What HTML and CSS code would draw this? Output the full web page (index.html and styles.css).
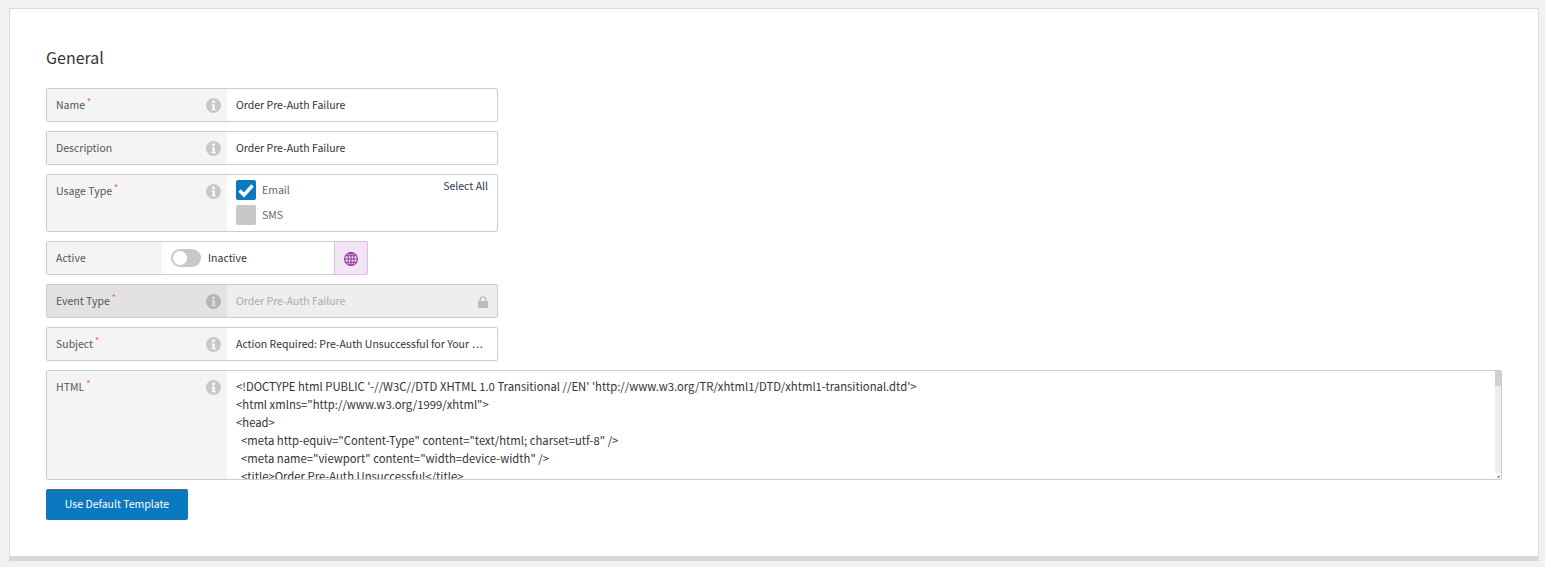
FILE: index.html
```html
<!DOCTYPE html>
<html lang="en">
<head>
<meta charset="utf-8">
<title>General</title>
<link rel="stylesheet" href="styles.css">
</head>
<body>
<main class="card">
  <h2 class="title">General</h2>
  <div class="form">
    <div class="row">
      <div class="label"><span>Name<sup class="req">*</sup></span>
        <svg class="info" viewBox="0 0 16 16"><circle cx="8" cy="8" r="8"/><circle class="i" cx="8" cy="4.2" r="1.5"/><path class="i" d="M6 6.9h3.3v4.7h1v1.4H6v-1.4h1v-3.3H6z"/></svg>
      </div>
      <div class="value">Order Pre-Auth Failure</div>
    </div>
    <div class="row">
      <div class="label"><span>Description</span>
        <svg class="info" viewBox="0 0 16 16"><circle cx="8" cy="8" r="8"/><circle class="i" cx="8" cy="4.2" r="1.5"/><path class="i" d="M6 6.9h3.3v4.7h1v1.4H6v-1.4h1v-3.3H6z"/></svg>
      </div>
      <div class="value">Order Pre-Auth Failure</div>
    </div>
    <div class="row row-usage">
      <div class="label label-top"><span>Usage Type<sup class="req">*</sup></span>
        <svg class="info" viewBox="0 0 16 16"><circle cx="8" cy="8" r="8"/><circle class="i" cx="8" cy="4.2" r="1.5"/><path class="i" d="M6 6.9h3.3v4.7h1v1.4H6v-1.4h1v-3.3H6z"/></svg>
      </div>
      <div class="checks">
        <div class="check-list">
          <div class="check"><span class="box box-on"><svg viewBox="0 0 20 20"><path d="M3.5 10.5l4.5 4.5 8.5-9.5" fill="none" stroke="#fff" stroke-width="3.4"/></svg></span>Email</div>
          <div class="check"><span class="box"></span>SMS</div>
        </div>
        <a class="select-all">Select All</a>
      </div>
    </div>
    <div class="row row-active">
      <div class="label label-active"><span>Active</span></div>
      <div class="value value-toggle"><span class="toggle"><span class="knob"></span></span><span>Inactive</span></div>
      <div class="globe">
        <svg viewBox="1 1 14 14" fill="none" stroke="#93379b" stroke-width="1.1"><circle cx="8" cy="8" r="6.4"/><ellipse cx="8" cy="8" rx="3" ry="6.4"/><path d="M8 1.6v12.8M1.6 8h12.8M2.6 4.8h10.8M2.6 11.2h10.8"/></svg>
      </div>
    </div>
    <div class="row row-disabled">
      <div class="label"><span>Event Type<sup class="req">*</sup></span>
        <svg class="info info-dark" viewBox="0 0 16 16"><circle cx="8" cy="8" r="8"/><circle class="i" cx="8" cy="4.2" r="1.5"/><path class="i" d="M6 6.9h3.3v4.7h1v1.4H6v-1.4h1v-3.3H6z"/></svg>
      </div>
      <div class="value value-locked"><span>Order Pre-Auth Failure</span>
        <svg class="lock" viewBox="0 0 10 12"><path d="M0 5h10v7H0z" fill="#bdbdbd"/><path d="M2.2 5.5V3.2a2.8 2.3 0 0 1 5.6 0v2.3" fill="none" stroke="#bdbdbd" stroke-width="1.4"/></svg>
      </div>
    </div>
    <div class="row">
      <div class="label"><span>Subject<sup class="req">*</sup></span>
        <svg class="info" viewBox="0 0 16 16"><circle cx="8" cy="8" r="8"/><circle class="i" cx="8" cy="4.2" r="1.5"/><path class="i" d="M6 6.9h3.3v4.7h1v1.4H6v-1.4h1v-3.3H6z"/></svg>
      </div>
      <div class="value"><span>Action Required: Pre-Auth Unsuccessful for Your <span class="dots">…</span></span></div>
    </div>
    <div class="row row-html">
      <div class="label label-top"><span>HTML<sup class="req">*</sup></span>
        <svg class="info" viewBox="0 0 16 16"><circle cx="8" cy="8" r="8"/><circle class="i" cx="8" cy="4.2" r="1.5"/><path class="i" d="M6 6.9h3.3v4.7h1v1.4H6v-1.4h1v-3.3H6z"/></svg>
      </div>
      <pre class="code">&lt;!DOCTYPE html PUBLIC '-//W3C//DTD XHTML 1.0 Transitional //EN' 'http://www.w3.org/TR/xhtml1/DTD/xhtml1-transitional.dtd'&gt;
&lt;html xmlns="http://www.w3.org/1999/xhtml"&gt;
&lt;head&gt;
  &lt;meta http-equiv="Content-Type" content="text/html; charset=utf-8" /&gt;
  &lt;meta name="viewport" content="width=device-width" /&gt;
  &lt;title&gt;Order Pre-Auth Unsuccessful&lt;/title&gt;</pre>
      <div class="scrollbar">
        <div class="thumb"></div>
        <div class="track"></div>
        <div class="grip"><svg viewBox="0 0 6 6" width="6" height="6"><path d="M4.5 2v2.5H2z" fill="#555"/></svg></div>
      </div>
    </div>
  </div>
  <button class="btn" type="button">Use Default Template</button>
</main>
</body>
</html>
```
FILE: styles.css
```css
* { box-sizing: border-box; }
html, body { height: 100%; }
body {
  margin: 0;
  padding: 8px 6px 0 9px;
  background: #f1f1f1;
  font-family: "Noto Sans CJK SC", "Noto Sans", sans-serif;
  font-size: 10.5px;
  color: #333;
  overflow: hidden;
}
.card {
  height: 553px;
  background: #fff;
  border: 1px solid #dcdcdc;
  border-bottom: 5px solid #d8d8d8;
  padding: 37px 36px 0 36px;
}
.title {
  margin: 0 0 19px;
  font-size: 16px;
  font-weight: 400;
  line-height: 23px;
  color: #333;
  height: 23px;
}
.form { display: flex; flex-direction: column; gap: 9px; }
.row {
  display: flex;
  width: 452px;
  height: 34px;
  border: 1px solid #ccc;
  border-radius: 2px;
  line-height: 18px;
  overflow: hidden;
}
.label {
  flex: 0 0 180px;
  display: flex;
  justify-content: space-between;
  align-items: center;
  padding: 0 6px 0 9px;
  background: #f4f4f4;
  color: #555;
}
.label-top { align-items: flex-start; padding-top: 7px; }
.req { color: #f5566a; font-size: 9px; line-height: 0; margin-left: 2px; }
.info { width: 15px; height: 15px; display: block; margin-top: 1px; }
.label-top .info { margin-top: 2px; }
.info circle:first-child { fill: #c8c8c8; }
.info .i { fill: #fff; }
.info-dark circle:first-child { fill: #b5b5b5; }
.info-dark .i { fill: #e2e2e2; }
.value {
  flex: 1;
  min-width: 0;
  display: flex;
  align-items: center;
  padding: 0 9px;
  color: #333;
}
.dots { font-family: "Liberation Sans", sans-serif; font-size: 12px; }
.row-usage { height: 58px; }
.checks {
  flex: 1;
  display: flex;
  justify-content: space-between;
  padding: 5px 9px;
}
.check-list { display: flex; flex-direction: column; gap: 5px; }
.check { display: flex; align-items: center; gap: 6px; height: 20px; color: #666; }
.box {
  width: 20px;
  height: 20px;
  border-radius: 2px;
  background: #c8c8c8;
}
.box-on { background: #0a79c0; }
.box svg { display: block; width: 20px; height: 20px; }
.select-all { color: #2b3a4a; line-height: 14px; margin-top: -1px; }
.row-active { width: 322px; overflow: visible; }
.label-active { flex: 0 0 115px; border-radius: 2px 0 0 2px; }
.value-toggle { gap: 7px; }
.toggle {
  width: 30px;
  height: 18px;
  border-radius: 9px;
  background: #c8c8c8;
  padding: 2px;
}
.knob { display: block; width: 14px; height: 14px; border-radius: 50%; background: #fff; }
.globe {
  flex: 0 0 34px;
  margin: -1px -1px -1px 0;
  display: flex;
  align-items: center;
  justify-content: center;
  padding-top: 2px;
  background: #f2e6f4;
  border: 1px solid #dcbfe0;
  border-radius: 0 2px 2px 0;
}
.globe svg { width: 14px; height: 14px; }
.row-disabled { background: #eee; }
.row-disabled .label { background: #e2e2e2; }
.value-locked { justify-content: space-between; color: #aaa; }
.lock { width: 10px; height: 12px; margin-top: 2px; }
.row-html { width: 1456px; height: 110px; }
.code {
  flex: 1;
  margin: 0;
  padding: 6px 9px;
  font: inherit;
  font-size: 11.3px;
  line-height: 18px;
  color: #333;
  overflow: hidden;
  white-space: pre;
}
.scrollbar { flex: 0 0 6px; display: flex; flex-direction: column; width: 6px; }
.thumb { height: 15px; background: #d0d0d0; }
.track { flex: 1; background: #eee; }
.grip { height: 6px; background: #fff; }
.grip svg { display: block; }
.btn {
  display: block;
  margin-top: 9px;
  width: 142px;
  height: 31px;
  border: 0;
  border-radius: 2px;
  background: #0a79c0;
  color: #fff;
  font: inherit;
  padding: 0 0 2px;
}
```
